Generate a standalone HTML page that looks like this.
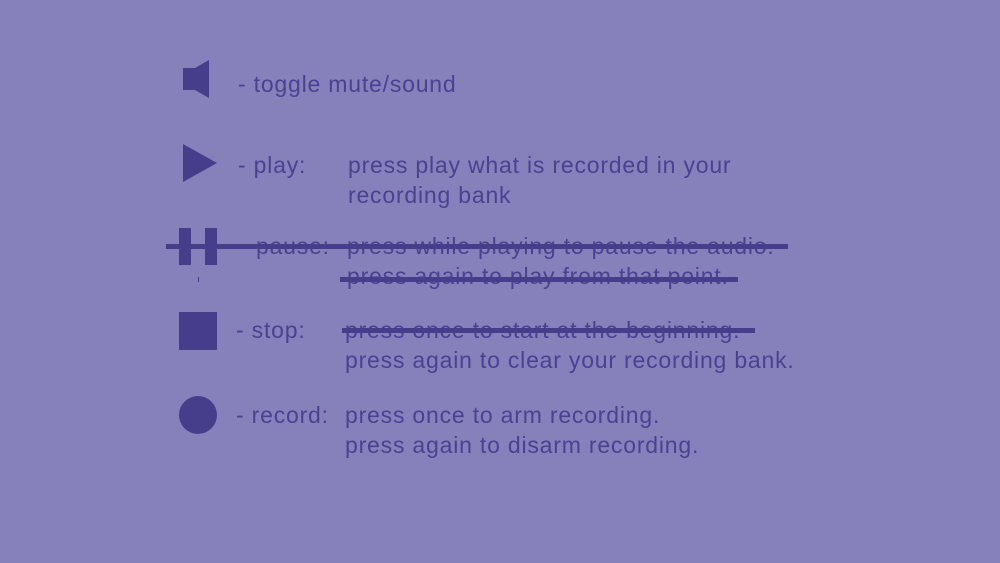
<!DOCTYPE html>
<html><head><style>
body{margin:0;width:1000px;height:563px;background:#8680bb;position:relative;overflow:hidden;font-family:"Liberation Sans",sans-serif;}
.t{position:absolute;font-size:23px;line-height:30px;height:30px;color:#4a4291;white-space:nowrap;letter-spacing:0.8px}
.b{position:absolute;background:#463e8a}
</style></head><body>
<svg style="position:absolute;left:0;top:0" width="1000" height="563">
<polygon points="183,68 195,68 209,60 209,98 195,90 183,90" fill="#463e8a"/>
<polygon points="183,144 217,163 183,182" fill="#463e8a"/>
<rect x="179" y="228" width="12" height="37" fill="#463e8a"/>
<rect x="205" y="228" width="12" height="37" fill="#463e8a"/>
<rect x="198" y="277" width="1" height="5" fill="#463e8a"/>
<rect x="179" y="312" width="38" height="38" fill="#463e8a"/>
<circle cx="198" cy="415" r="19" fill="#463e8a"/>
</svg>
<div class="t" style="left:238px;top:69px">- toggle mute/sound</div>
<div class="t" style="left:238px;top:150px">- play:</div>
<div class="t" style="left:348px;top:150px">press play what is recorded in your</div>
<div class="t" style="left:348px;top:180px">recording bank</div>
<div class="t" style="left:256px;top:231px">pause:</div>
<div class="t" style="left:347px;top:231px">press while playing to pause the audio.</div>
<div class="t" style="left:347px;top:261px">press again to play from that point.</div>
<div class="t" style="left:236px;top:315px">- stop:</div>
<div class="t" style="left:345px;top:315px">press once to start at the beginning.</div>
<div class="t" style="left:345px;top:345px">press again to clear your recording bank.</div>
<div class="t" style="left:236px;top:400px">- record:</div>
<div class="t" style="left:345px;top:400px">press once to arm recording.</div>
<div class="t" style="left:345px;top:430px">press again to disarm recording.</div>
<div class="b" style="left:166px;top:244px;width:622px;height:5px"></div>
<div class="b" style="left:340px;top:277px;width:398px;height:5px"></div>
<div class="b" style="left:342px;top:328px;width:413px;height:5px"></div>
</body></html>
